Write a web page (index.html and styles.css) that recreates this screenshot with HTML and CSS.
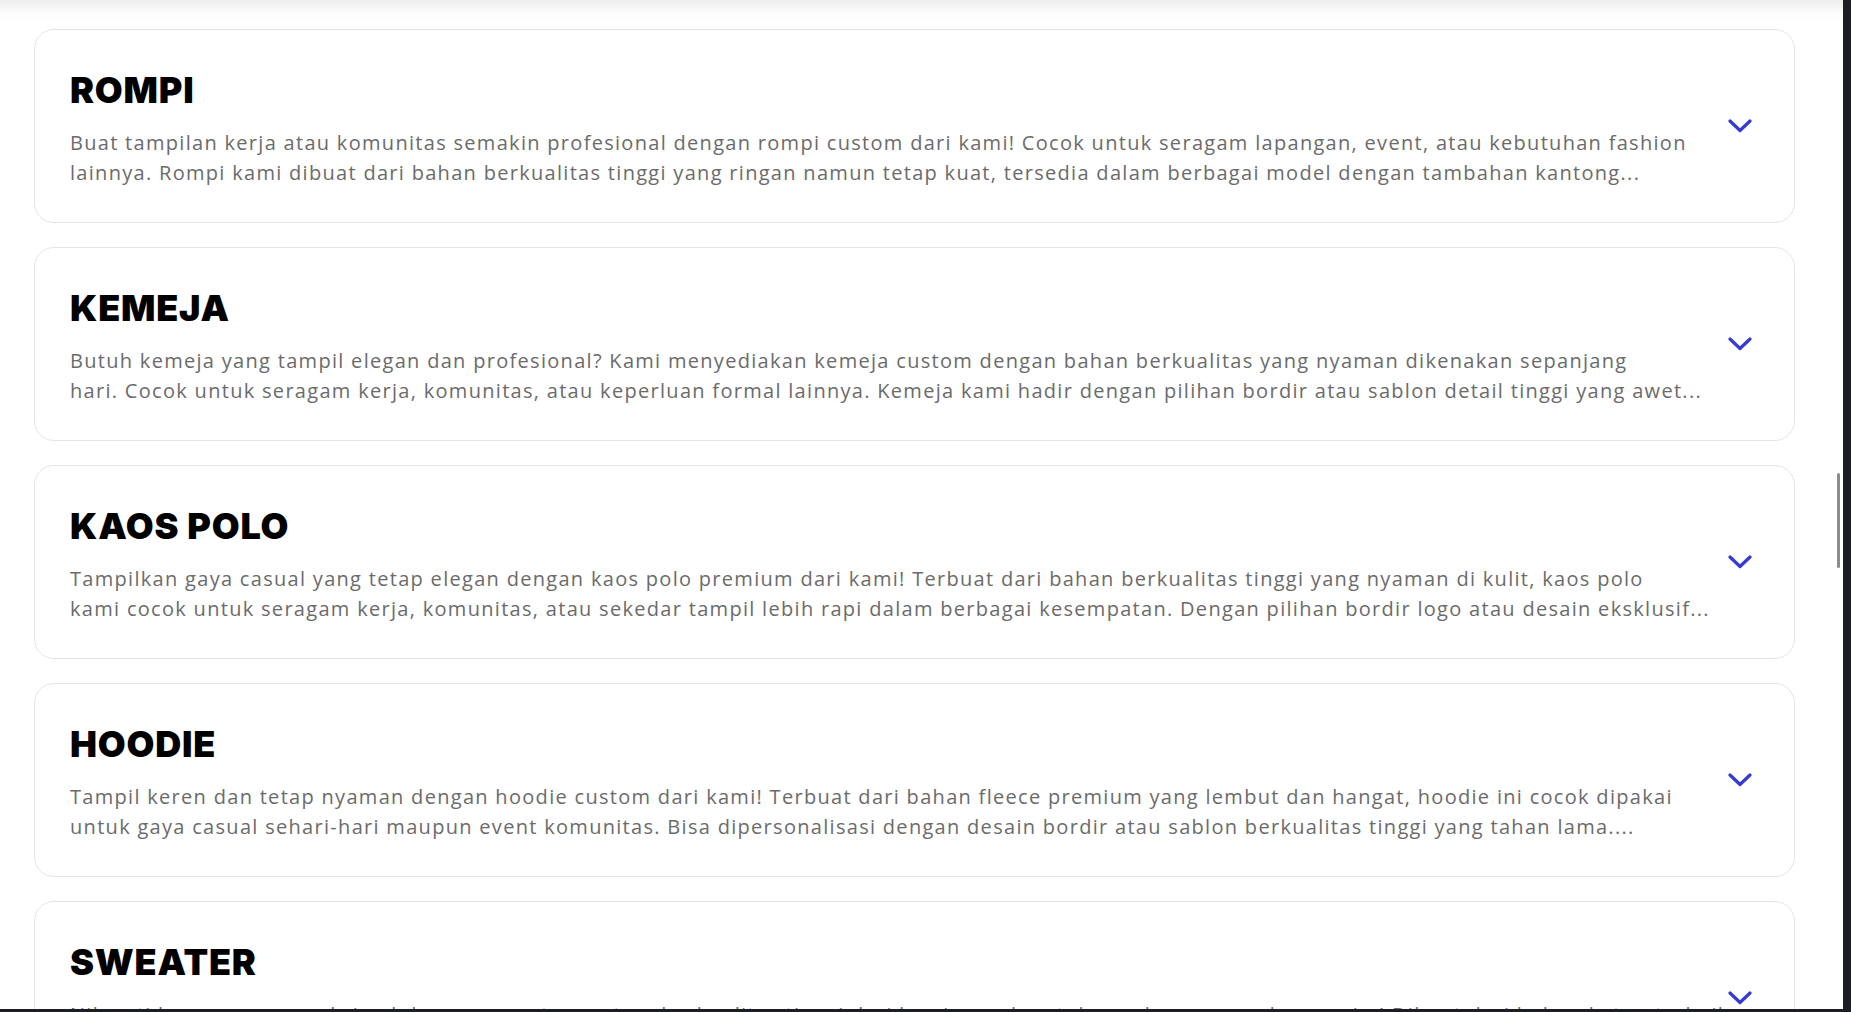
FILE: index.html
```html
<!DOCTYPE html>
<html lang="id">
<head>
<meta charset="utf-8">
<title>Produk</title>
<link rel="stylesheet" href="styles.css">
</head>
<body>
<div class="viewport">
  <div class="topshade"></div>
  <main class="list">
    <article class="card">
      <div class="card-body">
        <h2 class="card-title">ROMPI</h2>
        <p class="card-desc">Buat tampilan kerja atau komunitas semakin profesional dengan rompi custom dari kami! Cocok untuk seragam lapangan, event, atau kebutuhan fashion<br>lainnya. Rompi kami dibuat dari bahan berkualitas tinggi yang ringan namun tetap kuat, tersedia dalam berbagai model dengan tambahan kantong...</p>
      </div>
      <span class="chev"><svg viewBox="0 0 24 14" width="24" height="14"><polyline points="2,2 12,11.5 22,2" /></svg></span>
    </article>
    <article class="card">
      <div class="card-body">
        <h2 class="card-title">KEMEJA</h2>
        <p class="card-desc">Butuh kemeja yang tampil elegan dan profesional? Kami menyediakan kemeja custom dengan bahan berkualitas yang nyaman dikenakan sepanjang<br>hari. Cocok untuk seragam kerja, komunitas, atau keperluan formal lainnya. Kemeja kami hadir dengan pilihan bordir atau sablon detail tinggi yang awet...</p>
      </div>
      <span class="chev"><svg viewBox="0 0 24 14" width="24" height="14"><polyline points="2,2 12,11.5 22,2" /></svg></span>
    </article>
    <article class="card">
      <div class="card-body">
        <h2 class="card-title">KAOS POLO</h2>
        <p class="card-desc">Tampilkan gaya casual yang tetap elegan dengan kaos polo premium dari kami! Terbuat dari bahan berkualitas tinggi yang nyaman di kulit, kaos polo<br>kami cocok untuk seragam kerja, komunitas, atau sekedar tampil lebih rapi dalam berbagai kesempatan. Dengan pilihan bordir logo atau desain eksklusif...</p>
      </div>
      <span class="chev"><svg viewBox="0 0 24 14" width="24" height="14"><polyline points="2,2 12,11.5 22,2" /></svg></span>
    </article>
    <article class="card">
      <div class="card-body">
        <h2 class="card-title">HOODIE</h2>
        <p class="card-desc">Tampil keren dan tetap nyaman dengan hoodie custom dari kami! Terbuat dari bahan fleece premium yang lembut dan hangat, hoodie ini cocok dipakai<br>untuk gaya casual sehari-hari maupun event komunitas. Bisa dipersonalisasi dengan desain bordir atau sablon berkualitas tinggi yang tahan lama....</p>
      </div>
      <span class="chev"><svg viewBox="0 0 24 14" width="24" height="14"><polyline points="2,2 12,11.5 22,2" /></svg></span>
    </article>
    <article class="card">
      <div class="card-body">
        <h2 class="card-title">SWEATER</h2>
        <p class="card-desc">Nikmati kenyamanan maksimal dengan sweater custom berkualitas tinggi dari kami, cocok untuk segala suasana dan musim! Dibuat dari bahan katun terbaik<br>yang lembut dan hangat, sweater kami siap menemani aktivitas harian maupun acara komunitas dengan desain eksklusif...</p>
      </div>
      <span class="chev"><svg viewBox="0 0 24 14" width="24" height="14"><polyline points="2,2 12,11.5 22,2" /></svg></span>
    </article>
  </main>
  <div class="scroll-thumb"></div>
</div>
</body>
</html>
```

FILE: styles.css
```css
html, body {
  margin: 0;
  padding: 0;
  height: 100%;
  background: #1b1e25;
  overflow: hidden;
}

.viewport {
  position: relative;
  width: 1843px;
  height: 1009px;
  background: #ffffff;
  overflow: hidden;
}

.topshade {
  position: absolute;
  top: 0;
  left: 0;
  right: 0;
  height: 26px;
  background: linear-gradient(to bottom, #ededed 0%, rgba(250,250,250,0.6) 50%, rgba(255,255,255,0) 100%);
  pointer-events: none;
}

.list {
  display: flex;
  flex-direction: column;
  gap: 24px;
  padding: 29px 48px 0 34px;
}

.card {
  box-sizing: border-box;
  height: 194px;
  flex-shrink: 0;
  display: flex;
  align-items: flex-start;
  padding: 38px 42px 0 35px;
  border: 1px solid #e5e5e5;
  border-radius: 20px;
  background: #fff;
}

.card-body {
  flex: 1;
  min-width: 0;
}

.card-title {
  margin: 0 0 16px;
  font-family: "Inter", "Liberation Sans", sans-serif;
  font-weight: 900;
  font-size: 36px;
  line-height: 44px;
  letter-spacing: 0.8px;
  color: #000;
}

.card-desc {
  margin: 0;
  font-family: "Open Sans", "Liberation Sans", sans-serif;
  font-size: 20px;
  line-height: 29.5px;
  letter-spacing: 1.3px;
  color: #6b6b6b;
  white-space: nowrap;
}

.chev {
  align-self: center;
  margin-top: -38px;
  display: flex;
  margin-left: 20px;
}

.chev svg {
  display: block;
}

.chev polyline {
  fill: none;
  stroke: #3539d6;
  stroke-width: 3.2;
  stroke-linecap: round;
  stroke-linejoin: round;
}

.scroll-thumb {
  position: absolute;
  left: 1837px;
  top: 473px;
  width: 3px;
  height: 95px;
  border-radius: 2px;
  background: #8c8c8c;
}
```
